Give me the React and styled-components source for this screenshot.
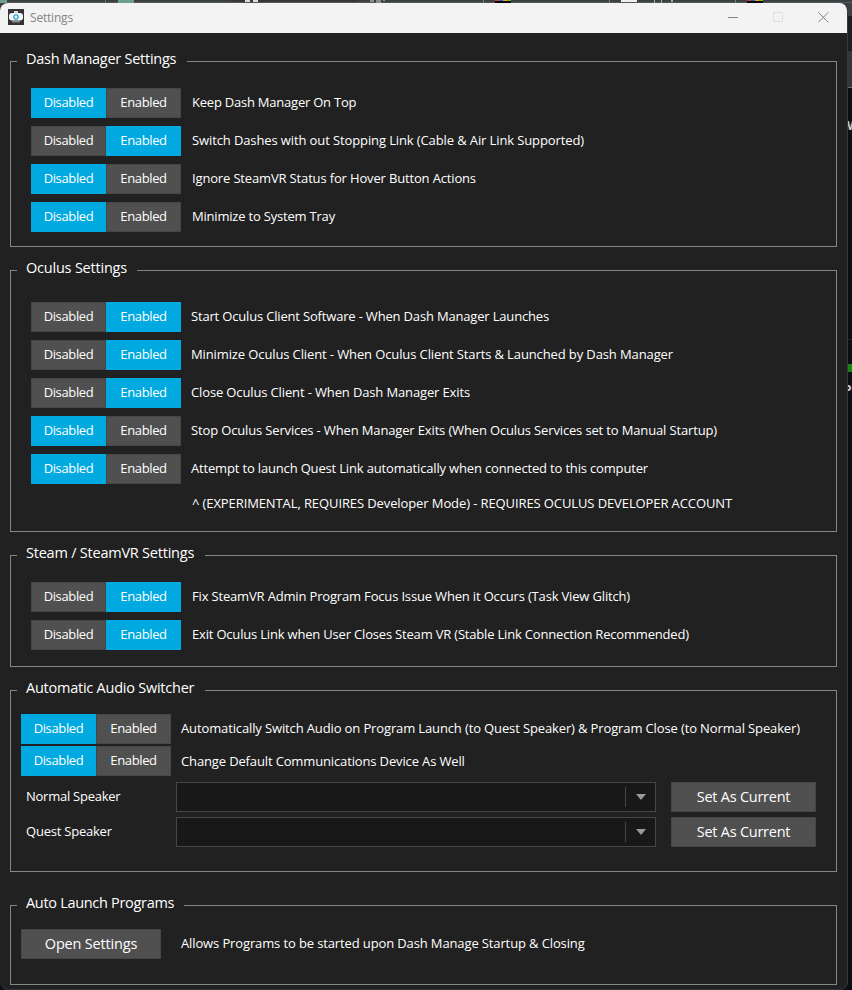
import React, { useState } from 'react';
import styled, { createGlobalStyle } from 'styled-components';

const GlobalStyle = createGlobalStyle`
  *, *::before, *::after { box-sizing: border-box; }
  body { margin: 0; overflow: hidden; background: #0b0e13; }
`;

const Desktop = styled.div`
  width: 852px;
  height: 990px;
  display: flex;
  flex-direction: column;
  overflow: hidden;
  background: linear-gradient(#3b3f41 0 16px, #0b0e13 60px);
  font-family: "Open Sans", "Noto Sans", sans-serif;
  color: #fff;
`;

const TabStrip = styled.div`
  flex: none;
  display: flex;
  height: 3px;
  background: linear-gradient(90deg, #3b4042 231px, #38363a 231px 358px, #3b4042 358px);
  border-bottom: 1px solid #55585a;
`;

const TabPiece = styled.span`
  flex: none;
  width: ${(p) => p.$w}px;
  height: ${(p) => p.$h || 3}px;
  margin-left: ${(p) => p.$gap || 0}px;
  background: ${(p) => p.$color};
`;

const Body = styled.div`
  display: flex;
  flex: 1;
  min-height: 0;
`;

const Window = styled.main`
  width: 848px;
  height: 987px;
  display: flex;
  flex-direction: column;
  overflow: hidden;
  background: #212121;
  border-right: 1px solid #3a3a3c;
  border-bottom: 1px solid #343436;
  border-radius: 8px;
`;

const Backdrop = styled.aside`
  flex: 1;
  display: flex;
  flex-direction: column;
  background: #0b0e13;
  overflow: hidden;
`;

const BackdropBand = styled.div`
  flex: none;
  height: ${(p) => p.$h}px;
  background: ${(p) => p.$color};
`;

const BackdropText = styled.div`
  flex: none;
  height: ${(p) => p.$h}px;
  margin-left: ${(p) => p.$shift || 0}px;
  overflow: hidden;
  font-size: 12px;
  font-weight: 700;
  line-height: ${(p) => p.$h}px;
  color: #ccc;
`;

const TitleBar = styled.header`
  flex: none;
  display: flex;
  align-items: center;
  height: 30px;
  padding: 0 18px 2px 8px;
  background: #f3f3f3;
  color: #858585;
`;

const WindowTitle = styled.h1`
  flex: 1;
  margin: 0 0 0 6px;
  padding-top: 1px;
  font-size: 12px;
  font-weight: 400;
  line-height: 18px;
  letter-spacing: -0.2px;
`;

const Controls = styled.div`
  display: flex;
  gap: 34px;
`;

const ControlIcon = styled.svg`
  display: block;
  width: 11px;
  height: 11px;
  fill: none;
  stroke: ${(p) => p.$color};
`;

const Group = styled.section`
  flex: none;
  width: 827px;
  height: ${(p) => p.$h}px;
  margin: ${(p) => p.$top}px 0 0 10px;
  border: solid #868686;
  border-width: 0 1px 1px;
`;

const Legend = styled.div`
  display: flex;
  height: 1px;
`;

const LegendLine = styled.span`
  height: 1px;
  background: #868686;
  ${(p) => (p.$stub ? 'width: 6px;' : 'flex: 1;')}
`;

const LegendTitle = styled.h2`
  width: ${(p) => p.$w}px;
  height: 20px;
  margin: -12px 0 0;
  padding-left: 9px;
  font-size: 14.5px;
  font-weight: 400;
  line-height: 20px;
  letter-spacing: ${(p) => p.$ls}px;
  white-space: nowrap;
`;

const Rows = styled.div`
  display: flex;
  flex-direction: column;
  gap: ${(p) => p.$gap}px;
  padding: ${(p) => p.$top}px 0 0 ${(p) => p.$left}px;
`;

const Row = styled.div`
  display: flex;
  align-items: center;
  height: 30px;
`;

const Toggle = styled.div`
  flex: none;
  display: flex;
  width: 150px;
  height: 30px;
`;

const Segment = styled.button`
  width: 75px;
  height: 30px;
  padding: 0 0 2px;
  border: 1px solid ${(p) => (p.$on ? '#00a9e0' : '#464646')};
  background: ${(p) => (p.$on ? '#00a9e0' : '#505050')};
  color: #fff;
  font-family: inherit;
  font-size: 13px;
  letter-spacing: -0.36px;
`;

const Label = styled.span`
  margin-left: ${(p) => p.$ml}px;
  padding-bottom: ${(p) => (p.$low ? 0 : 2)}px;
  font-size: 13px;
  line-height: 18px;
  letter-spacing: ${(p) => p.$ls}px;
  white-space: nowrap;
`;

const Note = styled(Label)`
  display: block;
  margin: 2px 0 0 161px;
`;

const SpeakerRows = styled.div`
  display: flex;
  flex-direction: column;
  gap: 5px;
  padding: 6px 0 0 15px;
`;

const SpeakerName = styled(Label)`
  width: 150px;
  margin: 0;
`;

const Combo = styled.div`
  display: flex;
  align-items: center;
  justify-content: flex-end;
  width: 480px;
  height: 30px;
  margin-right: 15px;
  background: #181818;
  border: 1px solid #464646;
`;

const ComboArrow = styled.span`
  display: flex;
  align-items: center;
  justify-content: center;
  width: 30px;
  height: 20px;
  border-left: 1px solid #464646;

  svg { display: block; fill: #999; }
`;

const PushButton = styled.button`
  width: ${(p) => p.$w}px;
  height: 30px;
  padding: 0 0 2px;
  border: 1px solid #464646;
  background: #505050;
  color: #fff;
  font-family: inherit;
  font-size: 14.5px;
  letter-spacing: ${(p) => p.$ls}px;
`;

const AppIcon = () => (
  <svg width="16" height="16" viewBox="0 0 16 16">
    <path fill="#333336" d="M0 0h16v16H0z" />
    <path fill="#d8d8d8" d="M6 2h4v2H6z" />
    <path fill="#8a8a8c" d="M4 12h8v1.6H4z" />
    <rect x="1" y="4" width="14" height="7.6" rx="3" fill="#f6f6f6" />
    <circle cx="8" cy="8" r="2.1" fill="#e9f7fc" stroke="#2ba6d2" strokeWidth="1.3" />
  </svg>
);

function ToggleSwitch({ initial }) {
  const [on, setOn] = useState(initial);
  return (
    <Toggle>
      <Segment $on={!on} onClick={() => setOn(false)}>Disabled</Segment>
      <Segment $on={on} onClick={() => setOn(true)}>Enabled</Segment>
    </Toggle>
  );
}

function GroupBox({ title, titleWidth, ls, height, top, children }) {
  return (
    <Group $h={height} $top={top}>
      <Legend>
        <LegendLine $stub />
        <LegendTitle $w={titleWidth} $ls={ls}>{title}</LegendTitle>
        <LegendLine />
      </Legend>
      {children}
    </Group>
  );
}

const Options = ({ items, labelGap }) =>
  items.map(([text, on, ls, low]) => (
    <Row key={text}>
      <ToggleSwitch initial={on} />
      <Label $ml={labelGap} $ls={ls} $low={low}>{text}</Label>
    </Row>
  ));

const dash = [
  ['Keep Dash Manager On Top', false, -0.225],
  ['Switch Dashes with out Stopping Link (Cable & Air Link Supported)', true, -0.112],
  ['Ignore SteamVR Status for Hover Button Actions', false, -0.155],
  ['Minimize to System Tray', false, -0.2],
];

const oculus = [
  ['Start Oculus Client Software - When Dash Manager Launches', true, -0.175],
  ['Minimize Oculus Client - When Oculus Client Starts & Launched by Dash Manager', true, -0.115],
  ['Close Oculus Client - When Dash Manager Exits', true, -0.134],
  ['Stop Oculus Services - When Manager Exits (When Oculus Services set to Manual Startup)', false, -0.146],
  ['Attempt to launch Quest Link automatically when connected to this computer', false, -0.166],
];

const steam = [
  ['Fix SteamVR Admin Program Focus Issue When it Occurs (Task View Glitch)', true, -0.167],
  ['Exit Oculus Link when User Closes Steam VR (Stable Link Connection Recommended)', true, -0.186],
];

const audio = [
  ['Automatically Switch Audio on Program Launch (to Quest Speaker) & Program Close (to Normal Speaker)', false, -0.128],
  ['Change Default Communications Device As Well', false, -0.137, true],
];

const speakers = [
  ['Normal Speaker', -0.25],
  ['Quest Speaker', -0.22],
];

const rainbow = 'linear-gradient(90deg, #d33 4px, #1565d8 4px 8px, #f0a020 8px 12px, #7fb51c 12px) 0 0 / 100% 1px no-repeat #080808';

const tabPieces = [
  [0, 7, '#6f9e8f'],
  [98, 1, '#707476'],
  [12, 16, '#6f9e8f'],
  [111, 5, '#ddd', 2],
  [3, 5, '#ddd', 2],
  [112, 4, '#8b8f90', 2],
  [2, 5, '#8b8f90', 3],
  [2, 2, '#8b8f90', 1],
  [98, 1, '#7c8082'],
  [11, 16, rainbow],
  [98, 1, '#7c8082'],
  [11, 16, '#f1f1ea', 2],
  [17, 1, '#aaa'],
  [6, 1, '#aaa'],
  [9, 2, '#aaa', 2],
  [62, 1, '#7c8082'],
  [11, 16, rainbow],
];

export default function App() {
  return (
    <Desktop>
      <GlobalStyle />
      <TabStrip>
        {tabPieces.map(([gap, w, color, h], i) => (
          <TabPiece key={i} $gap={gap} $w={w} $color={color} $h={h} />
        ))}
      </TabStrip>
      <Body>
        <Window>
          <TitleBar>
            <AppIcon />
            <WindowTitle>Settings</WindowTitle>
            <Controls>
              <ControlIcon viewBox="0 0 11 11" $color="#858585"><path d="M0 5.5h10" /></ControlIcon>
              <ControlIcon viewBox="0 0 11 11" $color="#dedede"><rect x=".5" y=".5" width="9" height="9" rx=".5" /></ControlIcon>
              <ControlIcon viewBox="0 0 11 11" $color="#858585"><path d="M.3.3l10 10M10.3.3l-10 10" /></ControlIcon>
            </Controls>
          </TitleBar>

          <GroupBox title="Dash Manager Settings" titleWidth={170} ls={-0.26} height={186} top={28}>
            <Rows $top={26} $left={20} $gap={8}>
              <Options items={dash} labelGap={11} />
            </Rows>
          </GroupBox>

          <GroupBox title="Oculus Settings" titleWidth={120} ls={-0.21} height={262} top={23}>
            <Rows $top={31} $left={20} $gap={8}>
              <Options items={oculus} labelGap={10} />
              <Note $ls={-0.102}>^ (EXPERIMENTAL, REQUIRES Developer Mode) - REQUIRES OCULUS DEVELOPER ACCOUNT</Note>
            </Rows>
          </GroupBox>

          <GroupBox title="Steam / SteamVR Settings" titleWidth={188} ls={-0.225} height={112} top={23}>
            <Rows $top={26} $left={20} $gap={8}>
              <Options items={steam} labelGap={11} />
            </Rows>
          </GroupBox>

          <GroupBox title="Automatic Audio Switcher" titleWidth={188} ls={-0.24} height={182} top={23}>
            <Rows $top={23} $left={10} $gap={2}>
              <Options items={audio} labelGap={10} />
            </Rows>
            <SpeakerRows>
              {speakers.map(([name, ls]) => (
                <Row key={name}>
                  <SpeakerName $ls={ls}>{name}</SpeakerName>
                  <Combo>
                    <ComboArrow>
                      <svg width="10" height="6" viewBox="0 0 10 6"><path d="M0 0h10L5 6z" /></svg>
                    </ComboArrow>
                  </Combo>
                  <PushButton $w={145} $ls={-0.25}>Set As Current</PushButton>
                </Row>
              ))}
            </SpeakerRows>
          </GroupBox>

          <GroupBox title="Auto Launch Programs" titleWidth={167} ls={-0.31} height={80} top={33}>
            <Rows $top={23} $left={10} $gap={0}>
              <Row>
                <PushButton $w={140} $ls={-0.18}>Open Settings</PushButton>
                <Label $ml={20} $ls={-0.124}>Allows Programs to be started upon Dash Manage Startup &amp; Closing</Label>
              </Row>
            </Rows>
          </GroupBox>
        </Window>

        <Backdrop>
          <BackdropBand $h={13} $color="#3b3f41" />
          <BackdropBand $h={35} $color="#1d1e20" />
          <BackdropBand $h={36} $color="#343539" />
          <BackdropBand $h={1} $color="#66686a" />
          <BackdropBand $h={28} $color="#0b0e13" />
          <BackdropText $h={20} $shift={-1}>W</BackdropText>
          <BackdropBand $h={203} $color="#0b0e13" />
          <BackdropBand $h={1} $color="#222529" />
          <BackdropBand $h={24} $color="#0b0e13" />
          <BackdropBand $h={8} $color="#16820f" />
          <BackdropBand $h={8} $color="#0b0e13" />
          <BackdropText $h={20} $shift={-4}>Pr</BackdropText>
        </Backdrop>
      </Body>
    </Desktop>
  );
}
